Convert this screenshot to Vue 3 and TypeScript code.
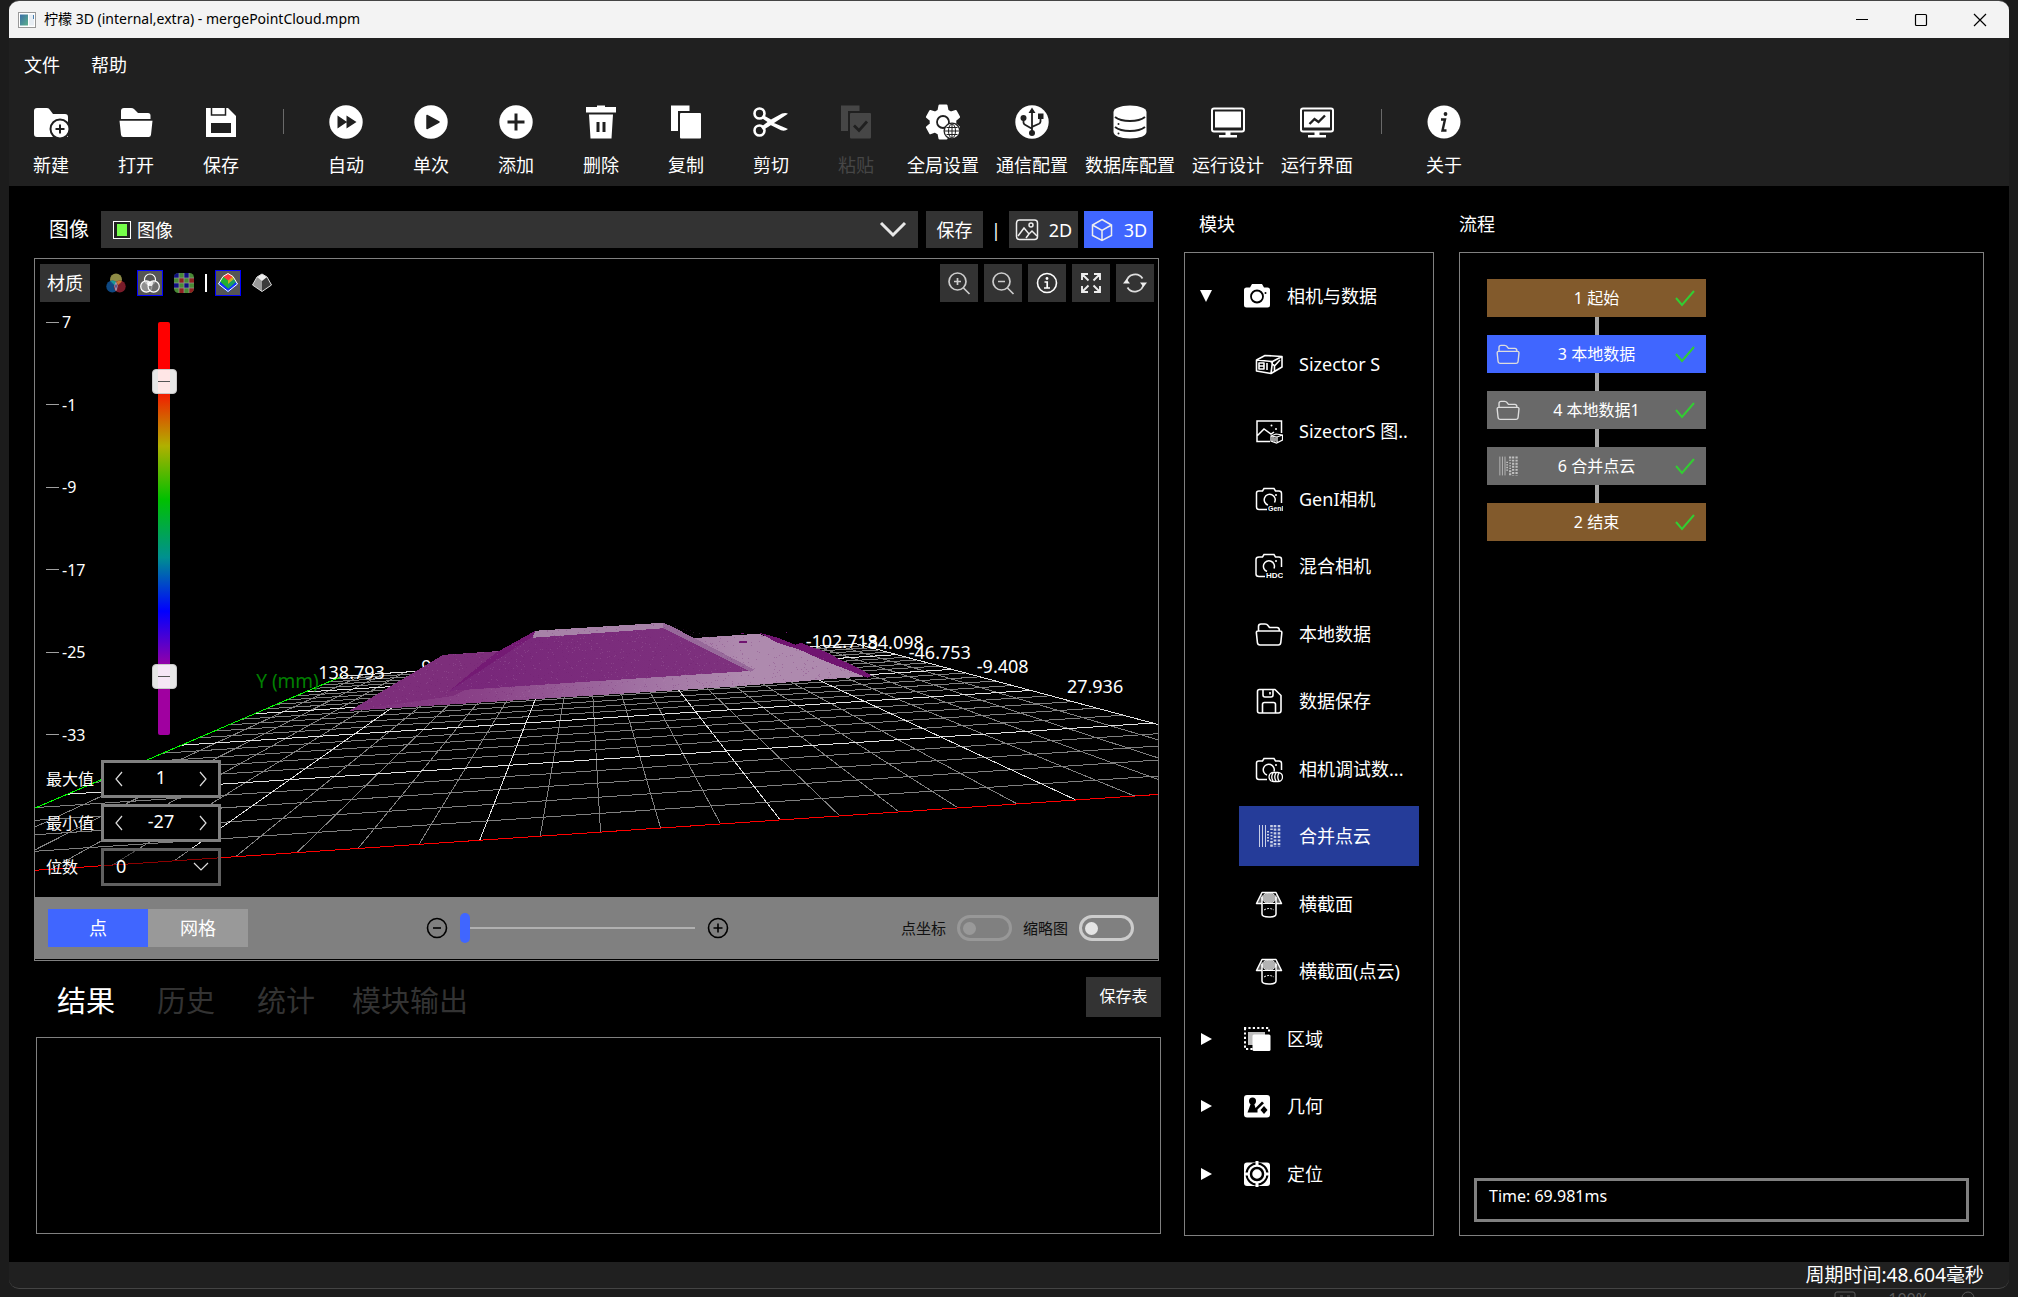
<script setup lang="ts">
import { ref } from 'vue'

interface Tool { id: string; label: string; icon: string; disabled?: boolean }
interface Line { x1: number; y1: number; x2: number; y2: number; major: boolean }

const icons: Record<string, string> = {
  newFolder:
    '<path fill="currentColor" d="M3 9a3 3 0 0 1 3-3h10q2 0 3 2l3 4h12a3 3 0 0 1 3 3v20H6a3 3 0 0 1-3-3z"/><circle cx="29" cy="27" r="9.500" fill="currentColor" stroke="#202020" stroke-width="2"/><path d="M29 22.500v9M24.500 27h9" stroke="#202020" stroke-width="2"/>',
  openFolder:
    '<path fill="currentColor" d="M5 17V9a3 3 0 0 1 3-3h7q2 0 3 1l4 4h10a2.500 2.500 0 0 1 2.500 2.500V17zM3.500 18.800h33l-1.500 14a2.500 2.500 0 0 1-2.500 2.200h-25a2.500 2.500 0 0 1-2.500-2.200z"/>',
  save:
    '<path fill="currentColor" d="M5 6h22l8 8v21H5z"/><path fill="none" stroke="#202020" stroke-width="1.500" d="M10.500 6v7h14V6"/><path fill="#202020" d="M10 21h20v10H10z"/>',
  auto:
    '<circle cx="20" cy="20" r="16.700" fill="currentColor"/><path fill="#202020" d="M11.500 13.500l9.500 6.500-9.500 6.500zM20.500 13.500l10 6.500-10 6.500z"/>',
  once:
    '<circle cx="20" cy="20" r="16.700" fill="currentColor"/><path fill="#202020" stroke="#202020" stroke-width="1.500" stroke-linejoin="round" d="M16 13.500L28 20l-12 6.500z"/>',
  add: '<circle cx="20" cy="20" r="16.700" fill="currentColor"/><path stroke="#202020" stroke-width="3" d="M20 11.500v17M11.500 20h17"/>',
  trash:
    '<path fill="currentColor" d="M16 3.500h8V5h11v5.500H5V5h11zM8 12.500h24L30.500 36.500h-21z"/><path stroke="#202020" stroke-width="3" d="M17 20v10M23 20v10"/>',
  copy:
    '<path fill="currentColor" d="M5 3.500h18.500V9H12v20H5z"/><rect x="14" y="11" width="21" height="25.500" rx="1" fill="currentColor"/>',
  cut:
    '<g fill="none" stroke="currentColor" stroke-width="2.600"><circle cx="8.500" cy="11.500" r="5"/><circle cx="8.500" cy="28.500" r="5"/></g><path fill="currentColor" d="M12 13l8 4.500 11-6q4-1 6 .3L17 25l-5 3-2-3 6.500-5-6-4zM23 21l14 6q-3 2.500-7 1.200L19.500 23z"/>',
  paste:
    '<path fill="currentColor" d="M5 3.500h18.500V9H12v20H5z"/><rect x="14" y="11" width="21" height="25.500" rx="1" fill="currentColor"/><path d="M18 23.500l5 5 8-9" fill="none" stroke="#202020" stroke-width="2.800"/>',
  gear:
    '<path fill="currentColor" stroke="currentColor" stroke-width="2" stroke-linejoin="round" d="M16.500 3.500h7l1 5 3.500 2 4.800-1.600 3.300 6-3.800 3.400v3.600l3.800 3.300-3.300 6-4.800-1.600-3.500 2-1 5h-7l-1-5-3.500-2-4.800 1.600-3.300-6 3.800-3.300v-3.600l-3.800-3.400 3.300-6L12 10.500l3.500-2z"/><circle cx="20" cy="20" r="6" fill="none" stroke="#202020" stroke-width="1.800"/><circle cx="29" cy="29" r="8.500" fill="#202020"/><circle cx="29" cy="29" r="7.200" fill="currentColor"/><path fill="none" stroke="#202020" d="M29 22v14M22 29h14M23.500 25.500h11M23.500 32.500h11"/><ellipse cx="29" cy="29" rx="3.500" ry="7" fill="none" stroke="#202020"/>',
  usb:
    '<circle cx="20" cy="20" r="16.700" fill="currentColor"/><path fill="none" stroke="#202020" stroke-width="1.800" d="M20 9v21M11.500 17v3.500q0 1.500 1.500 2.300l7 4M28.500 15v4.500q0 1.500-1.500 2.300l-7 3"/><path fill="#202020" d="M20 5.500l3.500 5.500h-7zM26 11.500h5.500V17H26z"/><circle cx="11.500" cy="16" r="3" fill="#202020"/><circle cx="20" cy="31" r="3" fill="#202020"/>',
  db: '<path fill="currentColor" d="M3.500 10q1-6 16.500-6.500Q35.500 4 36.500 10v20q-1 6-16.500 6.500Q4.500 36 3.500 30z"/><path fill="none" stroke="#202020" stroke-width="2" d="M5 15q5 4 15 4t15-4M5 25q5 4 15 4t15-4"/><circle cx="8.500" cy="22" r="1" fill="#202020"/><circle cx="8.500" cy="31.500" r="1" fill="#202020"/>',
  monitor:
    '<rect x="4" y="6.500" width="32" height="23" rx="2" fill="none" stroke="currentColor" stroke-width="2"/><path fill="currentColor" d="M7 9.500h26v16H7zM17.500 30h5v3H29v2.500H11V33h6.500z"/>',
  monitorRun:
    '<rect x="4" y="6.500" width="32" height="23" rx="2" fill="none" stroke="currentColor" stroke-width="2"/><path fill="currentColor" d="M7 9.500h26v16H7zM17.500 30h5v3H29v2.500H11V33h6.500z"/><path d="M12.500 22l5-5 4 3 6.500-6.500" fill="none" stroke="#202020" stroke-width="2.400"/>',
  about:
    '<circle cx="20" cy="20" r="16.500" fill="currentColor"/><circle cx="21.500" cy="12" r="1.900" fill="#202020"/><path fill="none" stroke="#202020" stroke-width="2.400" d="M17 17.500h4l-2.500 11h4"/>',
  camera:
    '<path fill="currentColor" d="M1 8q0-2.500 2.500-2.500H7L9 2h10l2 3.500h3.500Q27 5.500 27 8v15q0 2.500-2.500 2.500h-21Q1 25.500 1 23z"/><circle cx="14" cy="14.500" r="6" fill="none" stroke="#000" stroke-width="1.800"/><circle cx="22.500" cy="11" r="1" fill="#000"/>',
  box: '<path fill="none" stroke="currentColor" stroke-width="1.600" stroke-linejoin="round" d="M1.500 10l16 1.500-1.500 12L1.500 21zM1.500 10L10 5.500l17 1-9.500 5M27 6.500V17l-11 6.500M4 13h5v6H4zM4 16h5M12 13v7M16 12l3.500 4L25 10M19.500 16v5"/>',
  picBox:
    '<path fill="none" stroke="currentColor" stroke-width="1.500" d="M15 24.500H2V4h24.500v12M2 19l7-7 7 5 3-2"/><circle cx="16.500" cy="8.500" r="1" fill="currentColor"/><circle cx="21" cy="12" r="1" fill="currentColor"/><path fill="none" stroke="currentColor" stroke-width="1.200" d="M16 19l5-2 6.500 1v5l-6 3-5.500-2zM16 19l6 1 5.500-2M22 20v5M18 20v4M20 20.500v4"/>',
  camGen:
    '<path fill="none" stroke="currentColor" stroke-width="1.500" d="M12 24.500H4q-2.500 0-2.500-2.500V8Q1.500 6 4 6h3.500L9 3.500h10L20.500 6H24q2.500 0 2.500 2.500V18M13 20a5.500 5.500 0 1 1 6.500-2.500"/><circle cx="21" cy="10" r="1" fill="currentColor"/><text x="13" y="25.500" font-size="7" font-weight="700" font-family="Liberation Sans, sans-serif" fill="currentColor">GenI</text>',
  camHdc:
    '<path fill="none" stroke="currentColor" stroke-width="1.500" d="M10 24.500H4q-3 0-3-2.500V7.500q0-2.500 3-2.500h3.500L9 2.500h10L20.500 5H24q2.500 0 2.500 2.500V15M12 19.500a5.500 5.500 0 1 1 7-3"/><circle cx="21" cy="9" r="1" fill="currentColor"/><text x="11" y="26" font-size="8" font-weight="700" font-family="Liberation Sans, sans-serif" fill="currentColor">HDC</text>',
  folder:
    '<path fill="none" stroke="currentColor" stroke-width="1.600" stroke-linejoin="round" d="M3.500 11V6.500Q3.500 4 6 4h4q2 0 3 1.500l1.500 2H22q2.500 0 2.500 3.500M3 11h22q2 0 1.800 2l-1 9.500q-.3 2.500-2.500 2.500H5q-2.300 0-2.600-2.500L1.400 13Q1.200 11 3 11z"/>',
  disk: '<path fill="none" stroke="currentColor" stroke-width="1.600" stroke-linejoin="round" d="M4.500 2.500H20l6 6v15q0 2.500-2.500 2.500h-19Q2.500 26 2.500 24V4.500q0-2 2-2zM8 3v5q0 2 2 2h6q2 0 2-2V3M7.500 25.500v-8q0-2 2-2h9q2 0 2 2v8M15 5v2.500"/>',
  camDebug:
    '<path fill="none" stroke="currentColor" stroke-width="1.500" d="M12 24.500H4q-2.500 0-2.500-2.500V8Q1.500 6 4 6h3.500L9 3.500h10L20.500 6H24q2.500 0 2.500 2.500V15M12 20a5.500 5.500 0 1 1 7-3.500"/><circle cx="21" cy="10" r="1" fill="currentColor"/><g fill="none" stroke="currentColor" stroke-width="1.300"><rect x="14" y="17.500" width="13.500" height="9" rx="4.500"/><path d="M18 18q-2.500 4 0 8M21 18q-2.500 4 0 8M24 18q-2.500 4 0 8"/></g>',
  merge:
    '<g stroke="currentColor" fill="none" opacity=".75"><path stroke-width="1" d="M4.500 3v22M7.500 3v22M10.500 3v22"/><path stroke-width="2.600" stroke-dasharray="2.200 1.400" d="M24 3v22M20 3v22M16.500 3v5M16.500 19v6"/><path stroke-width="2" stroke-dasharray="1.500 1.500" d="M13 9v11M16.500 10v8"/></g>',
  section:
    '<path fill="none" stroke="currentColor" stroke-width="1.500" stroke-linejoin="round" d="M7 13.500H1.500L7 2.500h14l5.500 11H21M7 7v17q0 3 7 3t7-3V7"/><path fill="currentColor" opacity=".4" d="M7 3L2 13h5zM21 3l5 10h-5z"/><ellipse cx="14" cy="8" rx="6.500" ry="4.500" fill="currentColor" opacity=".7"/><ellipse cx="14" cy="8" rx="7" ry="5" fill="none" stroke="currentColor"/><path d="M8 13.500h12" fill="none" stroke="currentColor"/><path d="M9 20q5-3 10 0" fill="none" stroke="currentColor" stroke-dasharray="2 1.300"/>',
  region:
    '<path fill="none" stroke="currentColor" stroke-width="2" stroke-dasharray="2.200 2.200" d="M1 3h25v5M2 3v21h8"/><path fill="currentColor" opacity=".75" d="M5 7h17v3H10v10H5z"/><rect x="9.500" y="9.500" width="18" height="16.500" rx="1.500" fill="currentColor"/>',
  geometry:
    '<rect x="1" y="3" width="26" height="22.500" rx="3" fill="currentColor"/><circle cx="9.500" cy="9" r="3.500" fill="#000"/><path fill="#000" d="M8 11h3l1.500 5L19 9.500l2 1.700-6.500 6.300V20.500H4.500zM21 14l3.500 4-3.500 4-3.500-4z"/>',
  locate:
    '<rect x="1" y="2.500" width="26" height="23.500" rx="3" fill="currentColor"/><circle cx="14" cy="14" r="10.500" fill="none" stroke="#000" stroke-width="2"/><circle cx="14" cy="14" r="6" fill="none" stroke="#000" stroke-width="2.500"/><path stroke="currentColor" stroke-width="3" d="M14 1v5M14 22v5M1 14h5M22 14h5"/>',
  rgb: '<circle cx="10" cy="6.500" r="6" fill="#8e8b45"/><circle cx="6.300" cy="13.500" r="6" fill="#0f5090" opacity=".9"/><circle cx="13.700" cy="13.500" r="6" fill="#8e2030" opacity=".85"/><path fill="#1c9a98" d="M4.500 8q3-1.500 5.500 1l-1 3.500z"/><path fill="#c87830" d="M10.500 9q3-2 5.300-.5L12 12z"/><path fill="#3a2a70" stroke="#ddd" stroke-width=".6" d="M10 9.500q2.500 3 0 8-2.500-5 0-8z"/>',
  gray: '<g fill="#aaa" fill-opacity=".7" stroke="#fff" stroke-width="1.200"><circle cx="10" cy="6.500" r="5.500" fill="#555"/><circle cx="6.300" cy="13.500" r="5.600"/><circle cx="13.700" cy="13.500" r="5.600" fill="#777"/></g><path fill="#fff" d="M10 9l4-1-2 5h-4L6 8z" opacity=".8"/>',
  mosaic:
    '<rect width="20" height="20" rx="4.500" fill="#4a8a35"/><g fill="#101080"><path d="M0 4q0-4 5-4v5H0zM10 0h5v5h-5zM0 10h5v5H0zM10 10h5v5h-5z"/></g><g fill="#8e2020"><path d="M5 5h5v5H5zM15 5h5v5h-5zM5 15h5v5H5zM15 15h5q0 5-5 5z"/></g><path stroke="#999" stroke-width=".7" d="M5 0v20M10 0v20M15 0v20M0 5h20M0 10h20M0 15h20"/>',
  gemColor:
    '<path fill="#22b030" d="M5 3.500L0 11l10 8.500V2z"/><path fill="#1030ff" d="M0 11l10 8.500v-4L2 8.500zM20 11l-10 8.500v-4l8-7z"/><path fill="#c8b020" d="M10 2v10l6-5-1-3.500z"/><path fill="#1aa060" d="M10 11v5l8-7-2-3z"/><path fill="#ff3a3a" d="M5 3.500L10 .5l5 3-5 4z"/><path fill="none" stroke="#fff" d="M5 3.500L10 .5l5 3 4.500 7.500L10 18.500.5 11z"/>',
  gemGray:
    '<path fill="#999" d="M5 4L.5 12l9.500 6.500V5z"/><path fill="#3a3a3a" d="M10 5v13.500l9.500-6.500L15 4z"/><path fill="#eee" d="M5 4L10 1l5 3-5 4z"/><path fill="none" stroke="#ddd" stroke-linejoin="round" d="M5 4L10 1l5 3 4.500 8L10 18.500.5 12z"/>',
  zoomIn:
    '<g fill="none" stroke="#ccc" stroke-width="1.700"><circle cx="10.500" cy="10.500" r="8.500"/><path d="M16.500 17l6 6M10.500 7v7M7 10.500h7"/></g>',
  zoomOut:
    '<g fill="none" stroke="#ccc" stroke-width="1.700"><circle cx="10.500" cy="10.500" r="8.500"/><path d="M16.500 17l6 6M7 10.500h7"/></g>',
  info: '<circle cx="12" cy="12" r="9.500" fill="none" stroke="#fff" stroke-width="1.600"/><circle cx="12" cy="7.500" r="1.400" fill="#fff"/><path fill="none" stroke="#fff" stroke-width="1.700" d="M9.500 11h2.700v6M9 17h6"/>',
  expand:
    '<path fill="none" stroke="#eee" stroke-width="1.900" d="M3 9V3h6M3 3l6.500 6.500M15 3h6v6M21 3l-6.500 6.500M3 15v6h6M3 21l6.500-6.500M15 21h6v-6M21 21l-6.500-6.500"/>',
  refresh:
    '<path fill="none" stroke="#ddd" stroke-width="1.800" d="M3.500 11a8.700 8.700 0 0 1 16-3.500M20.500 13a8.700 8.700 0 0 1-16 3.500"/><path fill="#eee" d="M0 12.500l3.500-4.500L7 12.500zM17 11.500h7L20.500 16z"/>',
}

const menus: string[] = ['文件', '帮助']
const toolGroups: Tool[][] = [
  [
    { id: 'new', label: '新建', icon: 'newFolder' },
    { id: 'open', label: '打开', icon: 'openFolder' },
    { id: 'save', label: '保存', icon: 'save' },
  ],
  [
    { id: 'auto', label: '自动', icon: 'auto' },
    { id: 'once', label: '单次', icon: 'once' },
    { id: 'add', label: '添加', icon: 'add' },
    { id: 'delete', label: '删除', icon: 'trash' },
    { id: 'copy', label: '复制', icon: 'copy' },
    { id: 'cut', label: '剪切', icon: 'cut' },
    { id: 'paste', label: '粘贴', icon: 'paste', disabled: true },
    { id: 'global', label: '全局设置', icon: 'gear' },
    { id: 'comm', label: '通信配置', icon: 'usb' },
    { id: 'db', label: '数据库配置', icon: 'db' },
    { id: 'design', label: '运行设计', icon: 'monitor' },
    { id: 'run', label: '运行界面', icon: 'monitorRun' },
  ],
  [{ id: 'about', label: '关于', icon: 'about' }],
]

const colorModes = [
  { id: 'rgb', label: '彩色' },
  { id: 'gray', label: '灰度' },
  { id: 'mosaic', label: '马赛克' },
]
const heightModes = [
  { id: 'gemColor', label: '伪彩' },
  { id: 'gemGray', label: '单色' },
]
const viewTools = [
  { id: 'zoomIn', label: '放大' },
  { id: 'zoomOut', label: '缩小' },
  { id: 'info', label: '信息' },
  { id: 'expand', label: '全屏' },
  { id: 'refresh', label: '刷新' },
]

const tree = [
  { level: 0, label: '相机与数据', icon: 'camera', open: true },
  { level: 1, label: 'Sizector S', icon: 'box' },
  { level: 1, label: 'SizectorS 图..', icon: 'picBox' },
  { level: 1, label: 'GenI相机', icon: 'camGen' },
  { level: 1, label: '混合相机', icon: 'camHdc' },
  { level: 1, label: '本地数据', icon: 'folder' },
  { level: 1, label: '数据保存', icon: 'disk' },
  { level: 1, label: '相机调试数...', icon: 'camDebug' },
  { level: 1, label: '合并点云', icon: 'merge' },
  { level: 1, label: '横截面', icon: 'section' },
  { level: 1, label: '横截面(点云)', icon: 'section' },
  { level: 0, label: '区域', icon: 'region' },
  { level: 0, label: '几何', icon: 'geometry' },
  { level: 0, label: '定位', icon: 'locate' },
]
const selectedModule = ref('合并点云')

const flow = [
  { label: '1 起始', kind: 'end', icon: '' },
  { label: '3 本地数据', kind: 'active', icon: 'folder' },
  { label: '4 本地数据1', kind: 'step', icon: 'folder' },
  { label: '6 合并点云', kind: 'step', icon: 'merge' },
  { label: '2 结束', kind: 'end', icon: '' },
]

const ticks: number[] = [7, -1, -9, -17, -25, -33]
const maxValue = ref(1)
const minValue = ref(-27)
const colorMode = ref('gray')
const heightMode = ref('gemColor')
const drawMode = ref('点')
const tabs: string[] = ['结果', '历史', '统计', '模块输出']
const activeTab = ref('结果')

/* Perspective projection of the floor grid onto the scene. */
function project(u: number, v: number): [number, number] {
  const w = 1 + 0.001654 * u + 0.0774 * v
  return [(61.35 * u + 45.3 * v + 479.3) / w - 35, (-2.7 * u + 44.25 * v + 840.3) / w - 259]
}
function gridLine(u1: number, v1: number, u2: number, v2: number, major: boolean): Line {
  const [x1, y1] = project(u1, v1)
  const [x2, y2] = project(u2, v2)
  return { x1, y1, x2, y2, major }
}
const grid: Line[] = []
for (let u = -9; u <= 15; u++) grid.push(gridLine(u, 0, u, 25, u % 5 === 0))
for (let v = 1; v <= 25; v++) grid.push(gridLine(-10, v, 15, v, v % 5 === 0))
grid.sort((a, b) => Number(a.major) - Number(b.major))
const xAxis = gridLine(-10, 0, 15, 0, true)
const yAxis = gridLine(-10, 0, -10, 25, true)

const axisLabels = [
  { t: '-102.713', x: 770, y: 389 },
  { t: '-84.098', x: 826, y: 390 },
  { t: '-46.753', x: 873, y: 400 },
  { t: '-9.408', x: 941, y: 414 },
  { t: '27.936', x: 1031, y: 434 },
]

/* Scan noise on the cloud surface, from a fixed seed. */
let seed = 7
function rand(): number {
  seed = (seed * 1103515245 + 12345) % 2147483648
  return seed / 2147483648
}
let specksLight = ''
let specksDark = ''
for (let i = 0; i < 2600; i++) {
  const x = Math.round(314 + rand() * 520)
  const y = Math.round(364 + rand() * 90)
  if (i % 2) specksLight += `M${x} ${y}h1v1h-1z`
  else specksDark += `M${x} ${y}h1v1h-1z`
}
</script>

<template>
  <div class="desktop">
    <div class="window">
      <header class="titlebar">
        <svg class="app-icon" width="18" height="16" viewBox="0 0 18 16" aria-hidden="true">
          <defs>
            <linearGradient id="appg" x1="0" y1="0" x2="1" y2="1">
              <stop offset="0" stop-color="#3a6ea8" />
              <stop offset="1" stop-color="#5cb08a" />
            </linearGradient>
          </defs>
          <rect x=".5" y=".5" width="17" height="15" fill="#fff" stroke="#999" />
          <rect x="2" y="2.500" width="8" height="11" fill="url(#appg)" />
          <rect x="11" y="2.500" width="5" height="11" fill="#e8eef4" />
          <rect x="15" y="3" width="1" height="4" fill="#4a80b0" />
        </svg>
        <h1>柠檬 3D (internal,extra) - mergePointCloud.mpm</h1>
        <div class="win-controls">
          <button aria-label="最小化"><svg width="14" height="14" viewBox="0 0 14 14"><path d="M1 6.500h12" /></svg></button>
          <button aria-label="最大化"><svg width="14" height="14" viewBox="0 0 14 14"><rect x="1.500" y="1.500" width="11" height="11" rx="1" /></svg></button>
          <button aria-label="关闭"><svg width="14" height="14" viewBox="0 0 14 14"><path d="M1 1l12 12M13 1L1 13" /></svg></button>
        </div>
      </header>

      <nav class="menubar">
        <button v-for="m in menus" :key="m">{{ m }}</button>
      </nav>

      <div class="toolbar">
        <template v-for="(group, gi) in toolGroups" :key="gi">
          <span v-if="gi" class="tool-sep"></span>
          <button v-for="t in group" :key="t.id" class="tool" :disabled="t.disabled">
            <svg width="40" height="40" viewBox="0 0 40 40" aria-hidden="true" v-html="icons[t.icon]"></svg>
            <span>{{ t.label }}</span>
          </button>
        </template>
      </div>

      <main class="workspace">
        <section class="left">
          <div class="source">
            <label for="image-source">图像</label>
            <div class="source-select">
              <svg class="swatch" width="18" height="18" viewBox="0 0 18 18" aria-hidden="true">
                <rect x=".5" y=".5" width="17" height="17" fill="#222" stroke="#fff" />
                <rect x="4" y="3" width="10" height="12" fill="#76ff4a" />
              </svg>
              <select id="image-source"><option>图像</option></select>
              <svg class="chevron" width="28" height="18" viewBox="0 0 28 18" aria-hidden="true"><path d="M2 2l12 12L26 2" /></svg>
            </div>
            <button class="flat save">保存</button>
            <span class="bar">|</span>
            <button class="flat dim">
              <svg width="24" height="24" viewBox="0 0 24 24" aria-hidden="true"><rect x="1.500" y="2" width="21" height="19.500" rx="3" /><circle cx="16" cy="7" r="2" /><path d="M3 18l6-8 5 6 3-3 5 5M11 20l3-4" /></svg>
              2D
            </button>
            <button class="flat dim on">
              <svg width="24" height="24" viewBox="0 0 24 24" aria-hidden="true"><path d="M12 1.500l9.500 5.500v10.500L12 22.500 2.500 17.500V7zM2.500 7L12 12.500 21.500 7M12 12.500v10" /></svg>
              3D
            </button>
          </div>

          <div class="viewer">
            <div class="stage">
              <svg class="scene" viewBox="0 0 1122 638" preserveAspectRatio="xMinYMax slice" role="img" aria-label="点云">
                <defs>
                  <linearGradient id="plane" x1="314" y1="0" x2="836" y2="0" gradientUnits="userSpaceOnUse">
                    <stop offset="0" stop-color="#7d2e7b" />
                    <stop offset=".25" stop-color="#8a4288" />
                    <stop offset=".55" stop-color="#a070a2" />
                    <stop offset=".75" stop-color="#ae8aae" />
                  </linearGradient>
                  <linearGradient id="face" x1="420" y1="0" x2="717" y2="0" gradientUnits="userSpaceOnUse">
                    <stop offset="0" stop-color="#78267a" />
                    <stop offset="1" stop-color="#7e327e" />
                  </linearGradient>
                  <clipPath id="cloud">
                    <path d="M314 452L408 396 462 393 500 372 627 364 690 379 723 375 836 417 695 428z" />
                  </clipPath>
                </defs>
                <g shape-rendering="crispEdges">
                  <line v-for="(l, i) in grid" :key="i" :x1="l.x1" :y1="l.y1" :x2="l.x2" :y2="l.y2" :class="l.major ? 'major' : 'minor'" />
                  <line :x1="xAxis.x1" :y1="xAxis.y1" :x2="xAxis.x2" :y2="xAxis.y2" class="x-axis" />
                  <line :x1="yAxis.x1" :y1="yAxis.y1" :x2="yAxis.x2" :y2="yAxis.y2" class="y-axis" />
                </g>
                <text x="386" y="414" class="axis-text">9</text>
                <g shape-rendering="crispEdges">
                  <path fill="url(#plane)" d="M314 452L408 396 723 375 836 417 695 428z" />
                  <path fill="#701470" d="M723 374l9 2 13 4 15 6 5-2 10 4 10 3 7 3 13 7 13 6 10 5 8 5-4 2-28-11-20-8-20-9-22-7-19-10z" />
                  <path fill="#7d2e7b" d="M314 452L408 396l54-3 6 20-50 24z" />
                  <path fill="#741a74" d="M500 372L462 393l-13 10-35 29 83-30z" />
                  <path fill="url(#face)" d="M497 378l131-9 89 43-303 20z" />
                  <path fill="#a782a8" d="M500 372l127-8 8 5-138 10z" />
                  <path fill="#97699a" d="M627 364l8 3 84 44-4 2-88-44z" />
                  <path fill="#701470" d="M703 382h8v2h-8zM705 374h3v1h-3zM750 373h1v1h-1z" />
                  <g clip-path="url(#cloud)">
                    <path :d="specksLight" fill="#b48ab4" opacity=".22" />
                    <path :d="specksDark" fill="#6c1a6c" opacity=".25" />
                  </g>
                </g>
                <text v-for="a in axisLabels" :key="a.t" :x="a.x" :y="a.y" class="axis-text">{{ a.t }}</text>
                <text x="283" y="420" class="axis-text">138.793</text>
                <text x="221" y="429" class="axis-name">Y (mm)</text>
              </svg>

              <div class="overlay">
                <div class="view-tools">
                  <button class="flat material">材质</button>
                  <div class="modes">
                    <button v-for="m in colorModes" :key="m.id" :class="{ on: colorMode === m.id }" :aria-label="m.label" @click="colorMode = m.id">
                      <svg width="20" height="20" viewBox="0 0 20 20" v-html="icons[m.id]"></svg>
                    </button>
                    <span class="mode-sep"></span>
                    <button v-for="m in heightModes" :key="m.id" :class="{ on: heightMode === m.id }" :aria-label="m.label" @click="heightMode = m.id">
                      <svg width="20" height="20" viewBox="0 0 20 20" v-html="icons[m.id]"></svg>
                    </button>
                  </div>
                  <div class="view-actions">
                    <button v-for="v in viewTools" :key="v.id" class="flat" :aria-label="v.label">
                      <svg width="24" height="24" viewBox="0 0 24 24" v-html="icons[v.id]"></svg>
                    </button>
                  </div>
                </div>

                <div class="legend">
                  <ul>
                    <li v-for="t in ticks" :key="t">{{ t }}</li>
                  </ul>
                  <div class="ramp">
                    <input v-model.number="maxValue" type="range" min="-33" max="7" aria-label="上限" />
                    <input v-model.number="minValue" type="range" min="-33" max="7" aria-label="下限" />
                  </div>
                </div>

                <div class="fields">
                  <label for="max-value">最大值</label>
                  <div class="spin">
                    <button aria-label="减小" @click="maxValue--"><svg width="10" height="16" viewBox="0 0 10 16"><path d="M8 1L2 8l6 7" /></svg></button>
                    <input id="max-value" v-model.number="maxValue" type="text" />
                    <button aria-label="增大" @click="maxValue++"><svg width="10" height="16" viewBox="0 0 10 16"><path d="M2 1l6 7-6 7" /></svg></button>
                  </div>
                  <label for="min-value">最小值</label>
                  <div class="spin">
                    <button aria-label="减小" @click="minValue--"><svg width="10" height="16" viewBox="0 0 10 16"><path d="M8 1L2 8l6 7" /></svg></button>
                    <input id="min-value" v-model.number="minValue" type="text" />
                    <button aria-label="增大" @click="minValue++"><svg width="10" height="16" viewBox="0 0 10 16"><path d="M2 1l6 7-6 7" /></svg></button>
                  </div>
                  <label for="digits">位数</label>
                  <div class="digits">
                    <select id="digits"><option>0</option></select>
                    <svg width="16" height="10" viewBox="0 0 16 10" aria-hidden="true"><path d="M1 1l7 7 7-7" /></svg>
                  </div>
                </div>
              </div>
            </div>

            <div class="view-footer">
              <div class="segmented">
                <button v-for="m in ['点', '网格']" :key="m" :class="{ on: drawMode === m }" @click="drawMode = m">{{ m }}</button>
              </div>
              <div class="point-size">
                <button aria-label="减小点"><svg width="22" height="22" viewBox="0 0 22 22"><circle cx="11" cy="11" r="9.500" /><path d="M7 11h8" /></svg></button>
                <input type="range" min="1" max="20" value="1" aria-label="点大小" />
                <button aria-label="增大点"><svg width="22" height="22" viewBox="0 0 22 22"><circle cx="11" cy="11" r="9.500" /><path d="M6.500 11h9M11 6.500v9" /></svg></button>
              </div>
              <div class="switches">
                <label for="coords">点坐标</label>
                <input id="coords" type="checkbox" disabled />
                <label for="thumb">缩略图</label>
                <input id="thumb" type="checkbox" />
              </div>
            </div>
          </div>

          <div class="result-head">
            <div class="tabs" role="tablist">
              <button v-for="t in tabs" :key="t" role="tab" :aria-selected="activeTab === t" :class="{ on: activeTab === t }" @click="activeTab = t">{{ t }}</button>
            </div>
            <button class="flat save-table">保存表</button>
          </div>
          <div class="result-body"></div>
        </section>

        <section class="column modules">
          <h2>模块</h2>
          <div class="panel tree">
            <button
              v-for="n in tree"
              :key="n.label"
              :class="['node', n.level ? 'leaf' : 'group', { on: n.label === selectedModule }]"
              @click="selectedModule = n.label"
            >
              <svg v-if="!n.level" class="arrow" width="12" height="12" viewBox="0 0 12 12" aria-hidden="true">
                <path :d="n.open ? 'M0 0h12L6 12z' : 'M1 0l11 6-11 6z'" />
              </svg>
              <svg width="28" height="28" viewBox="0 0 28 28" aria-hidden="true" v-html="icons[n.icon]"></svg>
              <span>{{ n.label }}</span>
            </button>
          </div>
        </section>

        <section class="column">
          <h2>流程</h2>
          <div class="panel flow">
            <div class="steps">
              <button v-for="s in flow" :key="s.label" :class="['step', s.kind]">
                <span class="step-icon"><svg v-if="s.icon" width="24" height="24" viewBox="0 0 28 28" aria-hidden="true" v-html="icons[s.icon]"></svg></span>
                <span>{{ s.label }}</span>
                <svg class="tick" width="20" height="18" viewBox="0 0 20 18" aria-hidden="true"><path d="M1 9l6 7L19 2" /></svg>
              </button>
            </div>
            <output class="time">Time: 69.981ms</output>
          </div>
        </section>
      </main>

      <footer class="statusbar">周期时间:48.604毫秒</footer>
    </div>

    <div class="behind">
      <svg width="22" height="14" viewBox="0 0 22 14" aria-hidden="true"><rect x="1" y="1" width="20" height="14" rx="2" /><path d="M6 5h3M13 5h3" /></svg>
      <span>100%</span>
      <svg width="14" height="14" viewBox="0 0 14 14" aria-hidden="true"><circle cx="7" cy="7" r="6" /></svg>
    </div>
  </div>
</template>

<style>
body {
  margin: 0;
  background: #1c1c1c;
}
</style>

<style scoped>
.desktop {
  box-sizing: border-box;
  height: 100vh;
  min-height: 1160px;
  display: flex;
  flex-direction: column;
  padding: 0 9px;
  background: #1c1c1c;
  color: #fff;
  font: 18px/24px 'Noto Sans', 'Noto Sans CJK SC', sans-serif;
  overflow: hidden;
}
.desktop *,
.desktop *::before {
  box-sizing: border-box;
}
button,
input,
select {
  margin: 0;
  padding: 0;
  border: 0;
  border-radius: 0;
  background: none;
  color: inherit;
  font: inherit;
}
svg {
  display: block;
  flex: none;
}
h1,
h2 {
  margin: 0;
  font-weight: 400;
}
.window {
  flex: 1;
  min-height: 0;
  display: flex;
  flex-direction: column;
  border-top: 1px solid #444;
  border-bottom: 1px solid #444;
  border-radius: 10px;
  background: #202020;
  overflow: hidden;
}

.titlebar {
  flex: none;
  display: flex;
  align-items: center;
  height: 37px;
  padding-left: 9px;
  background: #f3f3f3;
  color: #000;
}
.titlebar h1 {
  flex: 1;
  margin-left: 8px;
  font-size: 14px;
  line-height: 20px;
  padding-bottom: 2px;
}
.win-controls {
  display: flex;
}
.win-controls button {
  width: 59px;
  height: 36px;
  display: grid;
  place-items: center;
}
.win-controls svg {
  fill: none;
  stroke: #000;
  stroke-width: 1.2;
}

.menubar {
  flex: none;
  display: flex;
  gap: 31px;
  padding: 15px 15px 13px;
}
.toolbar {
  flex: none;
  display: flex;
  gap: 1px;
  height: 96px;
}
.tool {
  display: flex;
  flex-direction: column;
  align-items: center;
  gap: 11px;
  min-width: 84px;
  padding: 12px 8px 0;
  white-space: nowrap;
}
.tool:disabled {
  color: #464646;
}
.tool-sep {
  width: 39px;
  display: flex;
  justify-content: center;
}
.tool-sep::before {
  content: '';
  width: 1px;
  height: 25px;
  margin-top: 19px;
  background: #6a6a6a;
}

.workspace {
  flex: 1;
  min-height: 0;
  display: grid;
  grid-template-columns: minmax(0, 1fr) 250px 525px;
  column-gap: 25px;
  padding: 25px 25px 26px;
  background: #000;
}
.left {
  display: flex;
  flex-direction: column;
  min-height: 0;
  margin-right: -2px;
  padding-bottom: 2px;
}
.flat {
  background: #333;
  display: flex;
  align-items: center;
  justify-content: center;
}

.source {
  flex: none;
  display: flex;
  align-items: center;
  height: 37px;
  padding: 0 8px 0 15px;
}
.source label {
  font-size: 20px;
}
.source-select {
  flex: 1;
  position: relative;
  height: 37px;
  margin: 0 8px 0 12px;
  background: #333;
}
.source-select select {
  width: 100%;
  height: 100%;
  padding-left: 36px;
  appearance: none;
}
.swatch {
  position: absolute;
  left: 12px;
  top: 10px;
}
.chevron {
  position: absolute;
  right: 11px;
  top: 10px;
  fill: none;
  stroke: #e8e8e8;
  stroke-width: 3;
  pointer-events: none;
}
.save {
  width: 57px;
  height: 37px;
}
.bar {
  width: 26px;
  text-align: center;
}
.dim {
  width: 69px;
  height: 37px;
  gap: 10px;
}
.dim + .dim {
  margin-left: 6px;
}
.dim svg {
  fill: none;
  stroke: #eee;
  stroke-width: 1.5;
}
.dim.on {
  background: #4066ff;
}

.viewer {
  flex: 1;
  min-height: 0;
  display: flex;
  flex-direction: column;
  margin: 10px 2px 0 0;
  border: 1px solid #808080;
}
.stage {
  flex: 1;
  min-height: 0;
  position: relative;
}
.scene {
  position: absolute;
  inset: 0;
  width: 100%;
  height: 100%;
}
.scene line {
  stroke-width: 1;
}
.scene .minor {
  stroke: #808080;
}
.scene .major {
  stroke: #e2e2e2;
}
.scene .x-axis {
  stroke: #f00;
}
.scene .y-axis {
  stroke: #0f0;
}
.axis-text {
  font-size: 18px;
  fill: #fff;
}
.axis-name {
  font-size: 19px;
  fill: #008000;
}
.overlay {
  position: relative;
  height: 100%;
  display: flex;
  flex-direction: column;
  padding: 5px 4px 11px 5px;
}
.view-tools {
  display: flex;
  align-items: center;
}
.material {
  width: 50px;
  height: 38px;
}
.modes {
  display: flex;
  align-items: center;
  gap: 8px;
  margin-left: 13px;
}
.modes button {
  width: 26px;
  height: 26px;
  display: grid;
  place-items: center;
  border: 1px solid transparent;
}
.modes .on {
  border-color: #00f;
  background: #555;
}
.mode-sep {
  width: 2px;
  height: 18px;
  background: #fff;
}
.view-actions {
  display: flex;
  gap: 6px;
  margin-left: auto;
}
.view-actions button {
  width: 38px;
  height: 38px;
}

.legend {
  display: flex;
  height: 437px;
  margin-top: 8px;
  padding-left: 6px;
}
.legend ul {
  width: 112px;
  margin: 0;
  padding: 0;
  list-style: none;
  display: flex;
  flex-direction: column;
  justify-content: space-between;
  font-size: 16px;
}
.legend li {
  display: flex;
  align-items: center;
  gap: 3px;
}
.legend li::before {
  content: '';
  width: 13px;
  height: 1px;
  background: #a0a0a0;
}
.ramp {
  position: relative;
  width: 12px;
  margin: 12px 0;
  border-radius: 2px;
  background: linear-gradient(#f00 0 15%, #b0b000 30%, #00c000 43%, #009090 57%, #00f 70%, #a000a0 84%);
}
.ramp input {
  position: absolute;
  left: -7px;
  top: -16px;
  width: 26px;
  height: 446px;
  writing-mode: vertical-lr;
  direction: rtl;
  appearance: none;
  pointer-events: none;
}
.ramp input::-webkit-slider-thumb {
  appearance: none;
  width: 25px;
  height: 25px;
  border: 1px solid #c8c8c8;
  border-radius: 4px;
  background:
    linear-gradient(#555, #555) center / 12px 1px no-repeat,
    rgba(255, 255, 255, 0.9);
  pointer-events: auto;
}

.fields {
  display: grid;
  grid-template-columns: 55px 120px;
  align-items: center;
  gap: 6px 0;
  margin-top: auto;
  padding-left: 6px;
  font-size: 16px;
}
.spin,
.digits {
  display: flex;
  align-items: center;
  height: 38px;
  border: 3px solid #808080;
  background: #000;
  font-size: 18px;
}
.spin input {
  flex: 1;
  min-width: 0;
  height: 32px;
  padding-bottom: 4px;
  text-align: center;
}
.spin button {
  width: 30px;
  height: 32px;
  display: grid;
  place-items: center;
}
.spin svg,
.digits svg {
  fill: none;
  stroke: #ddd;
  stroke-width: 1.2;
}
.digits {
  padding: 0 9px 0 12px;
  border-color: #606060;
  background: rgba(0, 0, 0, 0.45);
}
.digits select {
  flex: 1;
  height: 32px;
  padding-bottom: 2px;
  appearance: none;
}

.view-footer {
  flex: none;
  display: flex;
  align-items: center;
  height: 62px;
  padding: 0 24px 0 13px;
  margin-bottom: 1px;
  background: #808080;
}
.segmented {
  display: flex;
}
.segmented button {
  width: 100px;
  height: 38px;
  background: #999;
}
.segmented .on {
  background: #4066ff;
}
.point-size {
  display: flex;
  align-items: center;
  gap: 12px;
  margin-left: 178px;
}
.point-size svg {
  fill: none;
  stroke: #000;
  stroke-width: 1.6;
}
.point-size input {
  width: 235px;
  height: 30px;
  appearance: none;
  background: linear-gradient(#b0b0b0, #b0b0b0) center / 100% 2px no-repeat;
}
.point-size input::-webkit-slider-thumb {
  appearance: none;
  width: 10px;
  height: 30px;
  border-radius: 5px;
  background: #4066ff;
}
.switches {
  display: flex;
  align-items: center;
  gap: 11px;
  margin-left: auto;
  color: #111;
  font-size: 15px;
}
.switches input {
  appearance: none;
  display: flex;
  align-items: center;
  width: 55px;
  height: 26px;
  padding: 0 3px;
  border: 3px solid #ccc;
  border-radius: 13px;
}
.switches input::before {
  content: '';
  width: 13px;
  height: 13px;
  border-radius: 50%;
  background: #e4e4e4;
}
.switches input:disabled {
  border-color: #989898;
}
.switches input:disabled::before {
  background: #999;
}

.result-head {
  flex: none;
  display: flex;
  align-items: flex-start;
  justify-content: space-between;
  margin: 16px 0 20px;
  height: 40px;
}
.tabs {
  display: flex;
  padding: 4px 0 0 2px;
}
.tabs button {
  min-width: 100px;
  padding: 0 16px;
  color: #333;
  font-size: 29px;
  line-height: 40px;
}
.tabs .on {
  color: #fff;
}
.save-table {
  width: 75px;
  height: 40px;
  padding-bottom: 2px;
  font-size: 16px;
}
.result-body {
  flex: none;
  height: 197px;
  margin-left: 2px;
  border: 1px solid #808080;
}

.column {
  display: flex;
  flex-direction: column;
  min-height: 0;
}
.column h2 {
  font-size: 18px;
  line-height: 26px;
  margin-bottom: 15px;
}
.modules h2 {
  padding-left: 15px;
}
.panel {
  flex: 1;
  min-height: 0;
  border: 1px solid #808080;
}
.tree {
  display: flex;
  flex-direction: column;
  justify-content: space-between;
  padding: 13px 14px 31px 15px;
}
.node {
  display: flex;
  align-items: center;
  gap: 16px;
  height: 60px;
  white-space: nowrap;
}
.arrow {
  fill: #fff;
  margin-right: 15px;
}
.leaf {
  margin-left: 39px;
  padding-left: 16px;
}
.leaf.on {
  background: #253c99;
}

.flow {
  display: flex;
  flex-direction: column;
  justify-content: space-between;
  padding: 26px 14px 13px;
}
.steps {
  display: flex;
  flex-direction: column;
  gap: 18px;
  width: 219px;
  margin-left: 13px;
  background: linear-gradient(#a8a8a8, #a8a8a8) center / 4px 100% no-repeat;
}
.step {
  display: grid;
  grid-template-columns: 24px 1fr 24px;
  align-items: center;
  justify-items: center;
  height: 38px;
  padding: 0 9px;
  background: #696969;
  font-size: 16px;
}
.step-icon {
  color: #ddd;
}
.step.end {
  background: #825a2c;
}
.step.active {
  background: #4066ff;
}
.tick {
  fill: none;
  stroke: #32cd32;
  stroke-width: 2;
}
.time {
  height: 44px;
  padding: 3px 12px;
  border: 3px solid #808080;
  font-size: 16px;
}

.statusbar {
  flex: none;
  height: 26px;
  padding-right: 25px;
  font-size: 19px;
  line-height: 26px;
  text-align: right;
}
.behind {
  flex: none;
  display: flex;
  justify-content: flex-end;
  gap: 32px;
  height: 8px;
  padding: 2px 34px 0 0;
  color: #5a5a5a;
  font-size: 16px;
  line-height: 16px;
  overflow: hidden;
}
.behind svg {
  fill: none;
  stroke: #5a5a5a;
}
</style>
